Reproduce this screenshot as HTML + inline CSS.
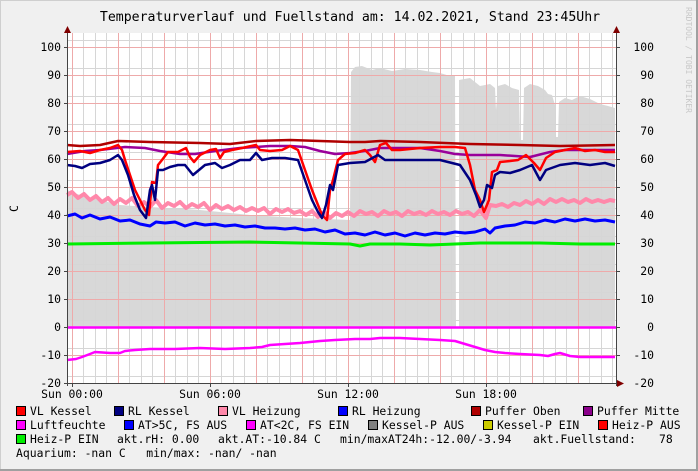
<!DOCTYPE html>
<html><head><meta charset="utf-8"><style>
html,body{margin:0;padding:0;background:#f0f0f0}
svg{display:block}
text{font-family:"DejaVu Sans Mono","Liberation Mono",monospace;font-size:11.4px;fill:#000;white-space:pre}
</style></head><body>
<svg width="698" height="471" viewBox="0 0 698 471" xmlns="http://www.w3.org/2000/svg" xml:space="preserve">
<rect x="0" y="0" width="698" height="471" fill="#f0f0f0"/>
<rect x="0.5" y="0.5" width="697" height="470" fill="none" stroke="#cfcfcf"/>
<rect x="696" y="0" width="2" height="471" fill="#a0a0a0"/>
<rect x="0" y="469" width="698" height="2" fill="#a0a0a0"/>
<text x="350" y="21" text-anchor="middle" style="font-size:13.2px">Temperaturverlauf und Fuellstand am: 14.02.2021, Stand 23:45Uhr</text>
<text transform="translate(686,7) rotate(90)" style="fill:#c8c8c8;font-size:8px">RRDTOOL / TOBI OETIKER</text>
<text transform="translate(18,212) rotate(-90)">C</text>
<rect x="67" y="33" width="550" height="350" fill="#fff"/>
<polygon fill="#d8d8d8" points="67,327 67,190 80,195 100,200 120,205 150,207 200,210 250,215 300,218 350,220 351,72 355,67 362,66 372,70 380,68 392,71 405,69 420,70 432,72 440,73 450,76 455,76 456,327 459,327 459,80 470,78 480,86 490,84 495,88 496,110 498,86 505,84 512,88 519,90 520,140 523,140 524,88 530,84 538,86 545,90 548,94 552,95 555,105 556,137 558,137 559,102 565,98 572,100 580,96 590,99 600,104 608,106 615,108 615,327"/>
<g stroke="#d6d6d6" stroke-width="1">
<path d="M83.5 33V383M95.5 33V383M106.5 33V383M129.5 33V383M141.5 33V383M152.5 33V383M175.5 33V383M187.5 33V383M198.5 33V383M221.5 33V383M233.5 33V383M244.5 33V383M267.5 33V383M279.5 33V383M290.5 33V383M313.5 33V383M325.5 33V383M336.5 33V383M359.5 33V383M371.5 33V383M382.5 33V383M405.5 33V383M417.5 33V383M428.5 33V383M451.5 33V383M463.5 33V383M474.5 33V383M497.5 33V383M509.5 33V383M520.5 33V383M543.5 33V383M555.5 33V383M566.5 33V383M589.5 33V383M601.5 33V383M612.5 33V383"/>
<path d="M67 40.5H617M67 68.5H617M67 96.5H617M67 124.5H617M67 152.5H617M67 180.5H617M67 208.5H617M67 236.5H617M67 264.5H617M67 292.5H617M67 320.5H617M67 348.5H617M67 376.5H617"/>
</g>
<g stroke="#eeaaaa" stroke-width="1">
<path d="M72.5 33V383M118.5 33V383M164.5 33V383M210.5 33V383M256.5 33V383M302.5 33V383M348.5 33V383M394.5 33V383M440.5 33V383M486.5 33V383M532.5 33V383M578.5 33V383"/>
<path d="M67 47.5H617M67 75.5H617M67 103.5H617M67 131.5H617M67 159.5H617M67 187.5H617M67 215.5H617M67 243.5H617M67 271.5H617M67 299.5H617M67 327.5H617M67 355.5H617"/>
</g>
<g fill="none" stroke-linejoin="round">
<polyline stroke="#ff88aa" stroke-width="4" points="67,195 72,192 78,198 84,194 90,200 96,196 102,202 108,198 114,204 120,199 126,203 132,198 138,206 144,202 150,207 156,200 162,208 168,203 174,206 180,202 186,208 192,204 198,207 204,203 210,210 216,205 222,209 228,206 234,210 240,207 246,211 252,208 258,211 264,208 270,214 276,209 282,212 288,209 294,213 300,211 306,215 312,211 318,217 324,212 330,218 336,213 342,216 348,212 354,216 360,211 366,214 372,212 378,216 384,211 390,214 396,212 402,216 408,211 414,214 420,212 426,215 432,211 438,214 444,212 450,215 456,211 462,214 468,212 474,216 480,210 486,218 490,205 496,206 502,204 508,207 514,203 520,205 526,201 532,204 538,200 544,204 550,199 556,202 562,199 568,202 574,200 580,203 586,199 592,202 598,200 604,202 610,200 615,201"/>
<polyline stroke="#0000ff" stroke-width="3" points="67,216 75,214 82,218 90,215 100,219 110,217 120,221 130,220 140,224 150,226 156,222 165,223 175,222 185,226 195,223 205,225 215,224 225,226 235,225 245,227 255,226 265,228 275,228 285,229 295,228 305,230 315,229 325,232 335,230 345,234 355,233 365,235 375,232 385,235 395,233 405,236 415,233 425,235 435,233 445,234 455,232 465,233 475,232 485,229 490,233 495,228 505,226 515,225 525,222 535,223 545,220 555,222 565,219 575,221 585,219 595,221 605,220 615,222"/>
<polyline stroke="#00ee00" stroke-width="3" points="67,244 150,243 250,242 300,243 350,244 360,246 370,244 400,244 430,245 480,243 540,243 580,244 615,244"/>
<polyline stroke="#b00000" stroke-width="2.5" points="67,145 80,146 100,145 118,141 150,142 200,143 230,144 256,141 290,140 320,141 350,142 365,142 380,141 420,142 470,144 520,145 560,146 615,145"/>
<polyline stroke="#9a009a" stroke-width="2.5" points="67,154 85,151 100,150 125,147 145,148 160,151 180,154 195,154 215,151 240,148 270,146 290,146 305,147 320,151 335,154 350,153 365,151 380,148 405,148 420,148 440,151 455,154 470,155 500,155 530,157 550,152 565,150 590,150 615,150"/>
<polyline stroke="#ff0000" stroke-width="2.5" points="67,152 80,151 90,153 100,150 110,148 118,145 122,150 125,160 130,175 135,190 140,200 145,210 149,215 152,182 156,183 158,165 162,160 168,152 178,152 186,148 190,157 194,162 200,155 210,150 216,149 220,158 224,152 232,150 242,148 256,145 260,150 270,151 282,150 290,146 298,150 305,170 312,190 318,205 322,215 327,220 330,190 333,180 338,160 345,154 355,153 365,150 370,155 375,162 380,145 386,143 392,150 400,150 410,149 420,148 440,147 455,147 465,148 470,165 475,190 480,200 484,212 489,200 492,172 497,170 500,162 510,161 518,160 526,155 534,163 540,170 546,158 555,152 565,150 575,148 585,151 595,150 605,152 615,152"/>
<polyline stroke="#000080" stroke-width="2.5" points="67,165 75,166 82,168 90,164 100,163 110,160 118,155 122,160 128,175 134,195 140,210 146,218 150,190 152,185 155,200 158,170 163,170 170,167 178,165 185,165 193,175 205,165 215,163 222,168 230,165 240,160 250,160 256,153 262,160 272,158 285,158 298,160 305,180 312,200 318,212 322,218 326,205 330,185 333,190 338,165 350,163 365,162 378,155 385,160 400,160 420,160 440,160 460,165 470,180 476,195 480,207 484,200 487,185 492,188 495,175 500,172 510,173 520,170 532,165 540,180 546,170 560,165 575,163 590,165 605,163 615,166"/>
<line x1="67" y1="327.5" x2="617" y2="327.5" stroke="#ff00ff" stroke-width="2.5"/>
<polyline stroke="#ff00ff" stroke-width="2.5" points="67,360 76,359 82,357 90,354 95,352 110,353 120,353 125,351 135,350 150,349 175,349 200,348 225,349 250,348 262,347 270,345 285,344 300,343 320,341 335,340 355,339 370,339 380,338 400,338 420,339 440,340 455,341 465,344 475,347 485,350 495,352 505,353 520,354 540,355 548,356 555,354 560,353 570,356 580,357 595,357 615,357"/>
</g>
<g stroke="#444" stroke-width="1">
<line x1="67.5" y1="30" x2="67.5" y2="386"/>
<line x1="616.5" y1="30" x2="616.5" y2="386"/>
<line x1="64" y1="383.5" x2="620" y2="383.5"/>
<path d="M64 47.5H67M64 75.5H67M64 103.5H67M64 131.5H67M64 159.5H67M64 187.5H67M64 215.5H67M64 243.5H67M64 271.5H67M64 299.5H67M64 327.5H67M64 355.5H67M617 47.5H620M617 75.5H620M617 103.5H620M617 131.5H620M617 159.5H620M617 187.5H620M617 215.5H620M617 243.5H620M617 271.5H620M617 299.5H620M617 327.5H620M617 355.5H620M72.5 383V387M210.5 383V387M348.5 383V387M486.5 383V387"/>
</g>
<polygon points="64,33 71,33 67.5,26" fill="#800000"/>
<polygon points="613,33 620,33 616.5,26" fill="#800000"/>
<polygon points="617,380 617,387 624,383.5" fill="#800000"/>
<g text-anchor="end">
<text x="61" y="51">100</text><text x="61" y="79">90</text><text x="61" y="107">80</text><text x="61" y="135">70</text><text x="61" y="163">60</text><text x="61" y="191">50</text><text x="61" y="219">40</text><text x="61" y="247">30</text><text x="61" y="275">20</text><text x="61" y="303">10</text><text x="61" y="331">0</text><text x="61" y="359">-10</text><text x="61" y="387">-20</text>
<text x="654" y="51">100</text><text x="654" y="79">90</text><text x="654" y="107">80</text><text x="654" y="135">70</text><text x="654" y="163">60</text><text x="654" y="191">50</text><text x="654" y="219">40</text><text x="654" y="247">30</text><text x="654" y="275">20</text><text x="654" y="303">10</text><text x="654" y="331">0</text><text x="654" y="359">-10</text><text x="654" y="387">-20</text>
</g>
<g text-anchor="middle">
<text x="72" y="398">Sun 00:00</text><text x="210" y="398">Sun 06:00</text><text x="348" y="398">Sun 12:00</text><text x="486" y="398">Sun 18:00</text>
</g>
<g stroke="#000" stroke-width="1">
<rect x="16.5" y="406.5" width="9" height="9" fill="#ff0000"/>
<rect x="114.5" y="406.5" width="9" height="9" fill="#000080"/>
<rect x="218.5" y="406.5" width="9" height="9" fill="#ff88aa"/>
<rect x="338.5" y="406.5" width="9" height="9" fill="#0000ff"/>
<rect x="471.5" y="406.5" width="9" height="9" fill="#b00000"/>
<rect x="583.5" y="406.5" width="9" height="9" fill="#8b008b"/>
<rect x="16.5" y="420.5" width="9" height="9" fill="#ff00ff"/>
<rect x="124.5" y="420.5" width="9" height="9" fill="#0000ff"/>
<rect x="246.5" y="420.5" width="9" height="9" fill="#ff00ff"/>
<rect x="368.5" y="420.5" width="9" height="9" fill="#808080"/>
<rect x="483.5" y="420.5" width="9" height="9" fill="#cccc00"/>
<rect x="598.5" y="420.5" width="9" height="9" fill="#ff0000"/>
<rect x="16.5" y="434.5" width="9" height="9" fill="#00ee00"/>
</g>
<text x="30" y="415">VL Kessel</text>
<text x="128" y="415">RL Kessel</text>
<text x="232" y="415">VL Heizung</text>
<text x="352" y="415">RL Heizung</text>
<text x="485" y="415">Puffer Oben</text>
<text x="597" y="415">Puffer Mitte</text>
<text x="30" y="429">Luftfeuchte</text>
<text x="138" y="429">AT&gt;5C, FS AUS</text>
<text x="260" y="429">AT&lt;2C, FS EIN</text>
<text x="382" y="429">Kessel-P AUS</text>
<text x="497" y="429">Kessel-P EIN</text>
<text x="612" y="429">Heiz-P AUS</text>
<text x="30" y="443">Heiz-P EIN</text>
<text x="117" y="443">akt.rH: 0.00</text>
<text x="218" y="443">akt.AT:-10.84 C</text>
<text x="340" y="443">min/maxAT24h:-12.00/-3.94</text>
<text x="533" y="443">akt.Fuellstand:</text>
<text x="659" y="443">78</text>
<text x="16" y="457">Aquarium: -nan C   min/max: -nan/ -nan</text>
</svg>
</body></html>
